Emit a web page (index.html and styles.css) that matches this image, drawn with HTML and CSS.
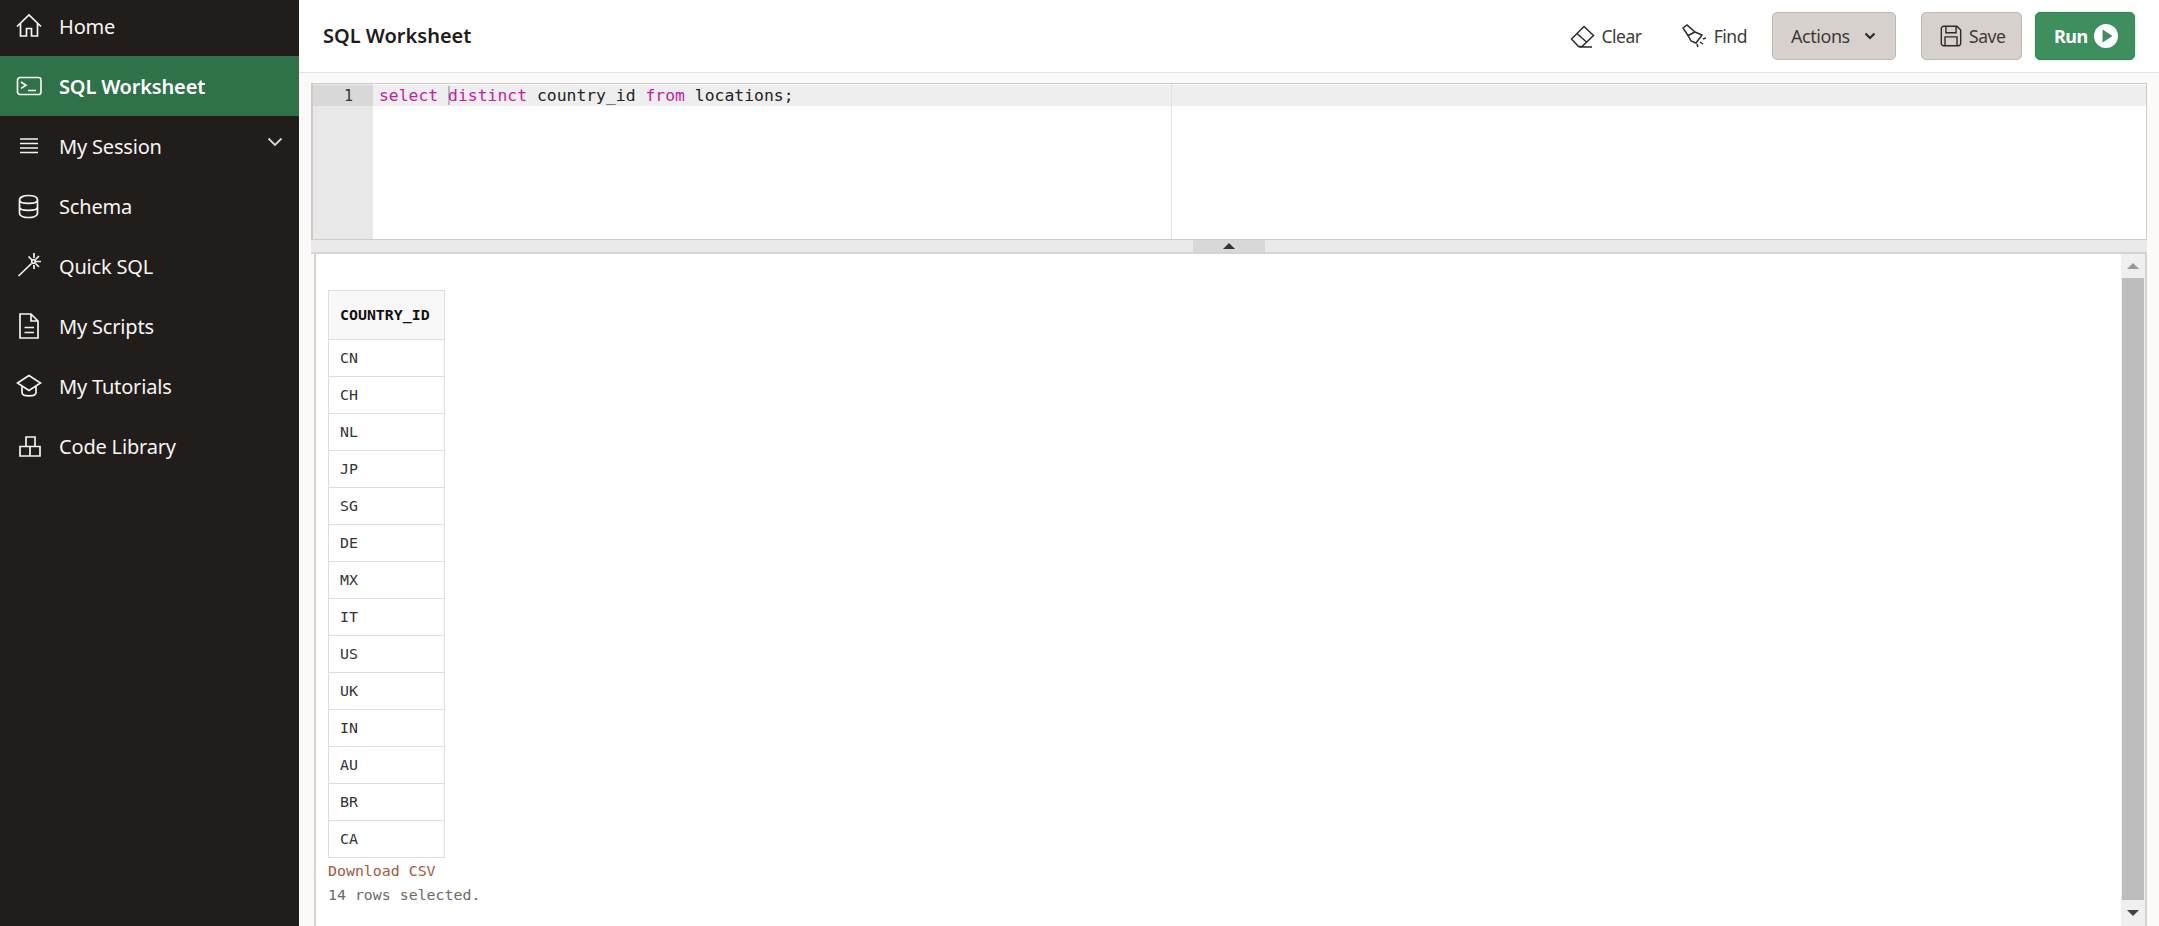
FILE: index.html
```html
<!DOCTYPE html>
<html lang="en">
<head>
<meta charset="utf-8">
<title>SQL Worksheet</title>
<link rel="stylesheet" href="styles.css">
</head>
<body>
<div class="app">
  <nav class="side">
    <a class="item">
      <svg class="ico" viewBox="0 0 26 26"><path d="M1 13.500 13 2l12 11.500M4.500 10.500V23h6v-7.500h5V23h6V10.500"/></svg>
      <span>Home</span>
    </a>
    <a class="item active">
      <svg class="ico" viewBox="0 0 26 26"><rect x="1.500" y="4.500" width="23.500" height="17" rx="2.500"/><path d="m5 9 5 3.200-5 3.200M12 17.500h8"/></svg>
      <span>SQL Worksheet</span>
    </a>
    <a class="item">
      <svg class="ico" viewBox="0 0 26 26"><path d="M4 6h18M4 10.500h18M4 15h18M4 19.500h18"/></svg>
      <span>My Session</span>
      <svg class="chev" viewBox="0 0 16 10"><path d="m1.500 1.500 6.500 6.500 6.500-6.500"/></svg>
    </a>
    <a class="item">
      <svg class="ico" viewBox="0 0 26 26"><path d="M3.500 7c0-6 18-6 18 0v13c0 6-18 6-18 0zM3.500 7c0 4.500 18 4.500 18 0M3.500 14c0 4.500 18 4.500 18 0"/></svg>
      <span>Schema</span>
    </a>
    <a class="item">
      <svg class="ico" viewBox="0 0 26 26"><path d="M2.500 23 15.500 10.500M18 0v5M18 12v4M25 8.500h-5M12.500 3.500l3.500 3.500M23 3l-3.500 3.500M23 14l-3.500-3.500"/><circle cx="17.500" cy="8.500" r="1.800"/></svg>
      <span>Quick SQL</span>
    </a>
    <a class="item">
      <svg class="ico" viewBox="0 0 26 26"><path d="M4 1h11l7 7v17H4zM15 1v7h7M8.500 14.500h9.500M8.500 19.500h9.500"/></svg>
      <span>My Scripts</span>
    </a>
    <a class="item">
      <svg class="ico" viewBox="0 0 26 26"><path d="M13 2.500 1.500 10 13 17.500 24.500 10zM6 13v6.500c0 4.500 14 4.500 14 0V13"/></svg>
      <span>My Tutorials</span>
    </a>
    <a class="item">
      <svg class="ico" viewBox="0 0 26 26"><path d="M10 4h9v9.500h-9zM4 13.500h10V23H4zM14 13.500h10V23H14z"/></svg>
      <span>Code Library</span>
    </a>
  </nav>
  <main class="main">
    <header class="head">
      <h1 class="title">SQL Worksheet</h1>
      <div class="tools">
        <button class="flat clear">
          <svg class="tool-ico" viewBox="0 0 26 26"><path d="M2.500 16 15 3.500l9.500 9L13 23.500H9.500zM8 10.500l10 9M10 24h13"/></svg>
          <span>Clear</span>
        </button>
        <button class="flat find">
          <svg class="tool-ico" viewBox="0 0 26 26"><path d="M3 5 7 2l8 7 7 3-6 8-5-2-3-5.500zM8 12.500l7-3.500M23 16l3-1M20 19l3 2M17 21l1 3"/></svg>
          <span>Find</span>
        </button>
        <button class="btn actions">
          <span>Actions</span>
          <svg class="small-chev" viewBox="0 0 12 8"><path d="m1.500 1.500 4.500 4.500 4.500-4.500"/></svg>
        </button>
        <button class="btn save">
          <svg class="save-ico" viewBox="0 0 26 26"><path d="M2.500 5A2.500 2.500 0 0 1 5 2.500h14.500L23.500 6.500V21A2.500 2.500 0 0 1 21 23.500H5A2.500 2.500 0 0 1 2.500 21zM7.500 2.500v7h11v-7M6.500 23.500V14h13v9.500"/></svg>
          <span>Save</span>
        </button>
        <button class="btn run">
          <span>Run</span>
          <svg class="play" viewBox="0 0 24 24"><circle cx="12" cy="12" r="12" fill="#fff"/><path d="M8.500 5.500v13l10-6.500z" fill="#3f8f5e"/></svg>
        </button>
      </div>
    </header>
    <section class="editor">
      <div class="gutter"><div class="num">1</div></div>
      <div class="code">
        <div class="line"><span class="kw">select</span> <span class="cursor"><span class="kw">d</span></span><span class="kw">istinct</span> country_id <span class="kw">from</span> locations;</div>
        <div class="margin"></div>
      </div>
    </section>
    <div class="split"><div class="grip"><i></i></div></div>
    <section class="results">
      <div class="output">
        <table class="grid">
          <thead><tr><th>COUNTRY_ID</th></tr></thead>
          <tbody>
            <tr><td>CN</td></tr><tr><td>CH</td></tr><tr><td>NL</td></tr><tr><td>JP</td></tr>
            <tr><td>SG</td></tr><tr><td>DE</td></tr><tr><td>MX</td></tr><tr><td>IT</td></tr>
            <tr><td>US</td></tr><tr><td>UK</td></tr><tr><td>IN</td></tr><tr><td>AU</td></tr>
            <tr><td>BR</td></tr><tr><td>CA</td></tr>
          </tbody>
        </table>
        <a class="dl">Download CSV</a>
        <div class="count">14 rows selected.</div>
      </div>
      <div class="bar">
        <div class="arrow up"></div>
        <div class="thumb"></div>
        <div class="arrow down"></div>
      </div>
    </section>
  </main>
</div>
</body>
</html>
```
FILE: styles.css
```css
* { box-sizing: border-box; }
html, body { margin: 0; height: 100%; overflow: hidden; }
body { font-family: "Noto Sans", "Open Sans", sans-serif; color: #1f1c1a; background: #fcfaf8; }
.app { display: flex; height: 926px; }

.side { width: 299px; flex: none; background: #211d1b; color: #f7f5f3; margin-top: -4px; height: 930px; }
.item { display: flex; align-items: center; height: 60px; padding-left: 16px; font-size: 20px; letter-spacing: -0.18px; position: relative; }
.item span { margin-left: 17px; }
.item.active { background: #2f7149; font-weight: 600; color: #fff; }
.ico { width: 26px; height: 26px; flex: none; fill: none; stroke: #f5f3f0; stroke-width: 1.7; }
.chev { width: 16px; height: 10px; position: absolute; right: 16px; top: 21px; fill: none; stroke: #d8d5d2; stroke-width: 1.800; }

.main { flex: 1; min-width: 0; display: flex; flex-direction: column; }
.head { height: 73px; flex: none; background: #fff; border-bottom: 1px solid #e4e1de; display: flex; align-items: center; justify-content: space-between; padding: 0 24px 1px 24px; }
.title { margin: 0; font-size: 20px; font-weight: 600; letter-spacing: 0; }
.tools { display: flex; align-items: center; }
.tools button { font: inherit; font-size: 18px; letter-spacing: -0.45px; color: #3e3a37; display: flex; align-items: center; height: 48px; border-radius: 5px; padding: 0; cursor: pointer; flex: none; }
.tools .flat { background: none; border: 0; font-size: 17.500px; }
.clear { gap: 6px; }
.find { margin-left: 38px; gap: 8px; }
.btn { background: #d6d1cd; border: 1px solid #bdb8b3; justify-content: flex-start; }
.tools .actions { width: 124px; margin-left: 25px; padding-left: 18px; gap: 14px; }
.tools .save { width: 101px; margin-left: 25px; padding-left: 17px; gap: 6px; font-size: 17.500px; }
.tools .run { width: 100px; margin-left: 13px; padding-left: 18px; background: #3f8f5e; border-color: #3a8758; color: #fff; font-weight: 700; gap: 6px; box-shadow: 0 0 0 1px #e6f0e9; }
.tool-ico { width: 26px; height: 26px; fill: none; stroke: #2f2b28; stroke-width: 1.500; }
.save-ico { width: 24px; height: 24px; fill: none; stroke: #2f2b28; stroke-width: 1.500; }
.small-chev { width: 12px; height: 8px; fill: none; stroke: #2f2b28; stroke-width: 2.200; }
.play { width: 24px; height: 24px; }

.editor { margin: 10px 12px 0 12px; height: 157px; flex: none; background: #fff; border: 1px solid #cfcbc8; border-left-width: 2px; display: flex; }
.gutter { width: 60px; background: #e8e8e8; flex: none; }
.num { height: 21px; margin-top: 1px; background: #d8d8d8; font-family: "DejaVu Sans Mono", monospace; font-size: 15px; line-height: 22px; color: #333; text-align: right; padding-right: 20px; }
.code { flex: 1; position: relative; }
.line { height: 21px; margin-top: 1px; background: #eeeeee; font-family: "DejaVu Sans Mono", monospace; font-size: 16.400px; line-height: 22px; color: #222; padding-left: 6px; white-space: pre; }
.kw { color: #c21fa3; }
.cursor { box-shadow: inset 2px 0 0 #b9b9b9; }
.margin { position: absolute; left: 798px; top: 0; bottom: 0; width: 1px; background: #e2e2e2; }

.split { height: 14px; flex: none; margin: 0 12px; background: #eaeaea; border-bottom: 2px solid #d6d3d0; display: flex; justify-content: center; }
.grip { width: 72px; background: #d8d8d8; display: flex; align-items: center; justify-content: center; }
.grip i { width: 0; height: 0; border: 6px solid transparent; border-top: 0; border-bottom: 6px solid #333; }

.results { flex: 1; min-height: 0; margin: 0 12px 0 15px; background: #fff; border-left: 2px solid #d6d2cf; border-right: 2px solid #d6d2cf; display: flex; }
.output { flex: 1; padding: 36px 0 0 12px; font-family: "DejaVu Sans Mono", monospace; font-size: 14.900px; }
.grid { border-collapse: collapse; width: 117px; table-layout: fixed; }
.grid th, .grid td { border: 1px solid #dedede; padding: 0 0 0 11px; text-align: left; }
.grid th { height: 49px; background: #f8f8f8; font-weight: 700; color: #111; }
.grid td { height: 37px; color: #333; }
.dl { display: block; color: #a4583e; margin-top: 2px; line-height: 22px; }
.count { color: #6e6a67; line-height: 24px; margin-top: 1px; }
.bar { width: 24px; flex: none; background: #efefef; display: flex; flex-direction: column; }
.arrow { flex: none; display: flex; align-items: center; justify-content: center; }
.up { height: 24px; }
.down { height: 26px; }
.arrow::before { content: ""; border: 6px solid transparent; }
.up::before { border-top: 0; border-bottom: 6px solid #999; }
.down::before { border-bottom: 0; border-top: 6px solid #444; }
.thumb { flex: 1; background: #bdbdbd; margin: 0 1px; }
```
